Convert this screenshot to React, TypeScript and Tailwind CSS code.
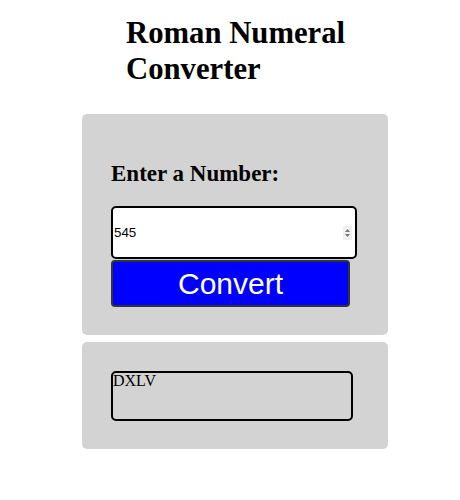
import { useState } from 'react';

const toRoman = (num: number) => {
  const map: [number, string][] = [
    [1000, 'M'], [900, 'CM'], [500, 'D'], [400, 'CD'],
    [100, 'C'], [90, 'XC'], [50, 'L'], [40, 'XL'],
    [10, 'X'], [9, 'IX'], [5, 'V'], [4, 'IV'], [1, 'I']
  ];
  let result = '';
  let n = num;
  for (const [value, numeral] of map) {
    while (n >= value) {
      result += numeral;
      n -= value;
    }
  }
  return result;
};

export default function App() {
  const [value, setValue] = useState('545');
  const [output, setOutput] = useState('DXLV');

  const handleConvert = () => {
    const n = parseInt(value, 10);
    if (!isNaN(n) && n > 0 && n < 4000) setOutput(toRoman(n));
  };

  return (
    <div className="min-h-[500px] w-[460px] bg-white font-['Liberation_Serif',serif] text-black">
      <h1 className="ml-[126px] w-[230px] pt-[15px] text-[30.7px] font-bold leading-[36px]">
        Roman Numeral Converter
      </h1>

      <div className="ml-[82px] mt-[27px] flex w-[306px] flex-col rounded-[5px] bg-[#d3d3d3] pl-[29px] pt-[46px] pb-[28px]">
        <label htmlFor="number" className="text-[23px] font-bold leading-[28px]">
          Enter a Number:
        </label>
        <div className="relative mt-[18px] w-[246px]">
          <input
            id="number"
            type="number"
            value={value}
            onChange={(e) => setValue(e.target.value)}
            className="h-[53px] w-full rounded-[5px] border-2 border-black bg-white px-[1px] font-['Liberation_Sans',sans-serif] text-[13.33px] outline-none [appearance:textfield] [&::-webkit-inner-spin-button]:appearance-none"
          />
          {/* spinner drawn so it shows without hover */}
          <div className="pointer-events-none absolute right-[5px] top-[20px] flex h-[14px] w-[9px] flex-col items-center justify-center gap-[2px] bg-[#f0f0f0]">
            <svg width="5" height="3" viewBox="0 0 5 3"><path d="M0 3 L2.5 0 L5 3 Z" fill="#777" /></svg>
            <svg width="5" height="3" viewBox="0 0 5 3"><path d="M0 0 L2.5 3 L5 0 Z" fill="#777" /></svg>
          </div>
        </div>
        <button
          type="button"
          onClick={handleConvert}
          className="mt-[1px] h-[47px] w-[239px] rounded-[4px] border-2 border-[#333] bg-[#0000ff] font-['Liberation_Sans',sans-serif] text-[30px] leading-none text-white"
        >
          Convert
        </button>
      </div>

      <div className="ml-[82px] mt-[7px] w-[306px] rounded-[5px] bg-[#d3d3d3] pl-[29px] pt-[29px] pb-[28px]">
        <div className="h-[50px] w-[242px] rounded-[5px] border-2 border-black text-[16px] leading-[16px]">
          {output}
        </div>
      </div>
    </div>
  );
}
